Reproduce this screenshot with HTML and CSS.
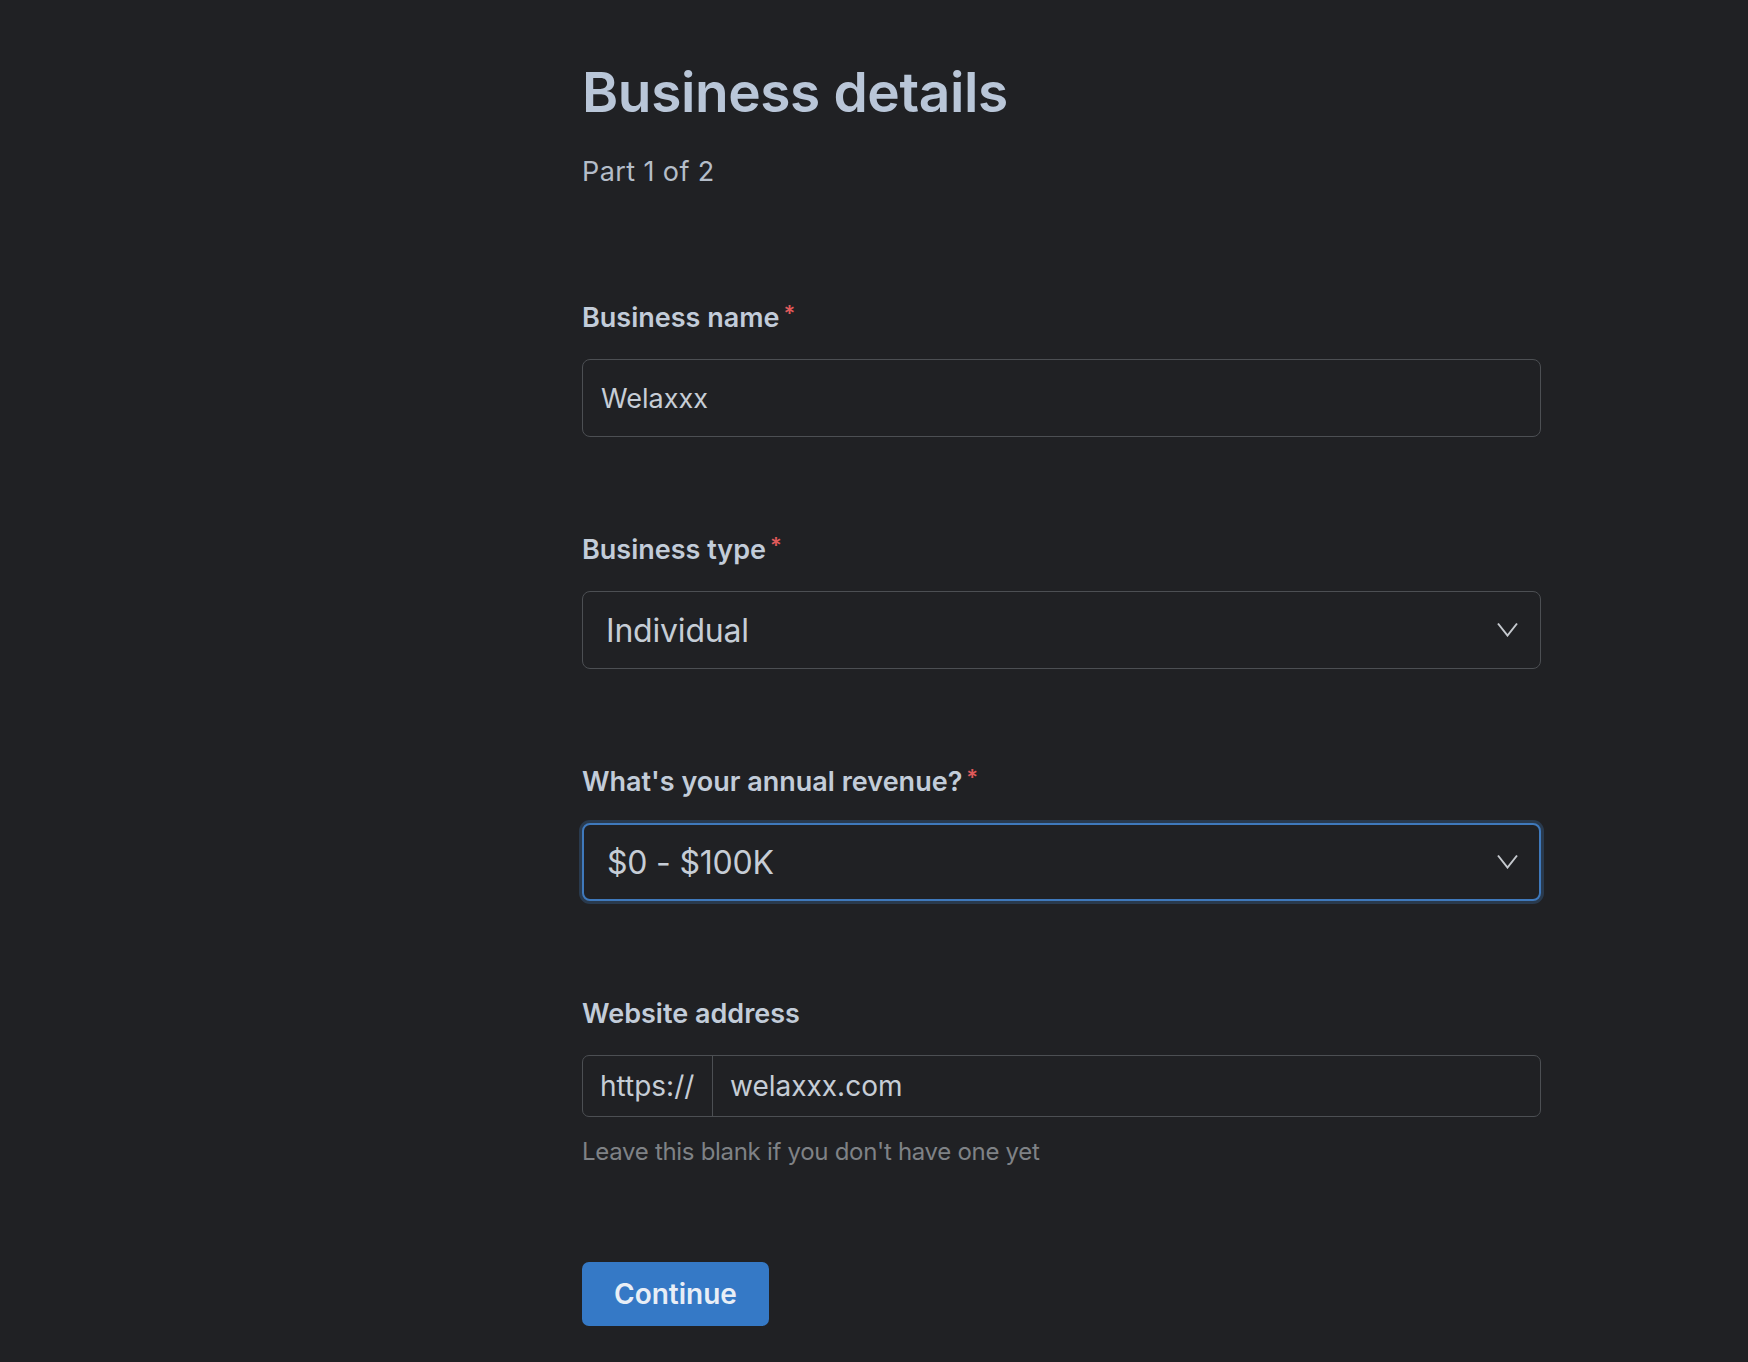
FILE: index.html
```html
<!DOCTYPE html>
<html lang="en">
<head>
  <meta charset="UTF-8">
  <title>Business details</title>
  <link rel="stylesheet" href="styles.css">
</head>
<body>

<main class="onboarding">
  <header class="step-header">
    <h1>Business details</h1>
    <p>Part 1 of 2</p>
  </header>

  <form class="form" onsubmit="return false;">
    <div class="field">
      <label for="businessName">Business name<span class="req">*</span></label>
      <input id="businessName" class="text-input" type="text" value="Welaxxx">
    </div>

    <div class="field">
      <label for="businessType">Business type<span class="req">*</span></label>
      <div class="select-wrap">
        <select id="businessType" class="select">
          <option>Individual</option>
          <option>Company</option>
          <option>Non-profit</option>
        </select>
        <svg class="chevron" width="21" height="15" viewBox="0 0 21 15"><path d="M1 1.5 L10.5 13.5 L20 1.5" fill="none" stroke="currentColor" stroke-width="2"/></svg>
      </div>
    </div>

    <div class="field">
      <label for="revenue">What's your annual revenue?<span class="req">*</span></label>
      <div class="select-wrap">
        <select id="revenue" class="select focused">
          <option>$0 - $100K</option>
          <option>$100K - $1M</option>
          <option>$1M+</option>
        </select>
        <svg class="chevron" width="21" height="15" viewBox="0 0 21 15"><path d="M1 1.5 L10.5 13.5 L20 1.5" fill="none" stroke="currentColor" stroke-width="2"/></svg>
      </div>
    </div>

    <div class="field">
      <label for="website">Website address</label>
      <div class="url-input">
        <span class="prefix">https://</span>
        <input id="website" type="text" value="welaxxx.com">
      </div>
      <p class="hint">Leave this blank if you don't have one yet</p>
    </div>

    <button class="btn-primary" type="submit">Continue</button>
  </form>
</main>

</body>
</html>
```

FILE: styles.css
```css
body {
  margin: 0;
  padding: 0;
  background-color: #202124;
  font-family: Inter, "Noto Sans", sans-serif;
  color: #c6cdd6;
}
.onboarding {
  width: 959px;
  margin-left: 582px;
  padding-top: 59px;
  padding-bottom: 40px;
}
.step-header h1 {
  margin: 0;
  font-size: 55px;
  line-height: 66px;
  font-weight: 600;
  letter-spacing: -0.4px;
  color: #b9c6d8;
}
.step-header p {
  margin: 31px 0 0;
  font-size: 27px;
  line-height: 31px;
  letter-spacing: 0.4px;
  color: #b4bdc9;
}
.form {
  margin-top: 115px;
}
.field {
  margin-bottom: 97px;
}
.field label {
  display: block;
  font-size: 27px;
  line-height: 32px;
  font-weight: 600;
  color: #c2ccd9;
  margin-bottom: 25px;
}
.req {
  color: #e05a5a;
  font-size: 22px;
  line-height: 0;
  vertical-align: 6px;
  margin-left: 4px;
}
.text-input {
  display: block;
  box-sizing: border-box;
  width: 100%;
  height: 78px;
  padding: 0 18px;
  font-family: inherit;
  font-size: 27px;
  color: #c6cdd6;
  background: #202124;
  border: 1.5px solid #4c4f53;
  border-radius: 8px;
  outline: none;
}
.select-wrap {
  position: relative;
}
.select {
  display: block;
  box-sizing: border-box;
  width: 100%;
  height: 78px;
  padding: 0 60px 0 23px;
  font-family: inherit;
  font-size: 32px;
  letter-spacing: -0.2px;
  color: #c6cdd6;
  background: #202124;
  border: 1.5px solid #4c4f53;
  border-radius: 8px;
  -webkit-appearance: none;
  appearance: none;
  outline: none;
}
.select.focused {
  border: 2px solid #3f79bc;
  box-shadow: 0 0 0 3px #293a4e;
}
.chevron {
  position: absolute;
  right: 23px;
  top: 31px;
  color: #c5c9ce;
  pointer-events: none;
}
.url-input {
  display: flex;
  height: 62px;
  box-sizing: border-box;
  border: 1.5px solid #4c4f53;
  border-radius: 7px;
}
.url-input .prefix {
  display: flex;
  align-items: center;
  width: 130px;
  box-sizing: border-box;
  padding-left: 17px;
  border-right: 1.5px solid #4c4f53;
  font-size: 28px;
}
.url-input input {
  flex: 1;
  min-width: 0;
  padding: 0 17px;
  font-family: inherit;
  font-size: 28px;
  color: #c6cdd6;
  background: transparent;
  border: none;
  outline: none;
}
.hint {
  margin: 20px 0 0;
  font-size: 24px;
  line-height: 30px;
  letter-spacing: -0.3px;
  color: #7f8286;
}
.field:last-of-type {
  margin-bottom: 95px;
}
.btn-primary {
  display: inline-block;
  height: 64px;
  padding: 0 32px;
  font-family: inherit;
  font-size: 28px;
  font-weight: 600;
  color: #e8eef6;
  background-color: #3579c6;
  border: none;
  border-radius: 7px;
  cursor: pointer;
}
.btn-primary:hover {
  background-color: #3c83d4;
}
```
